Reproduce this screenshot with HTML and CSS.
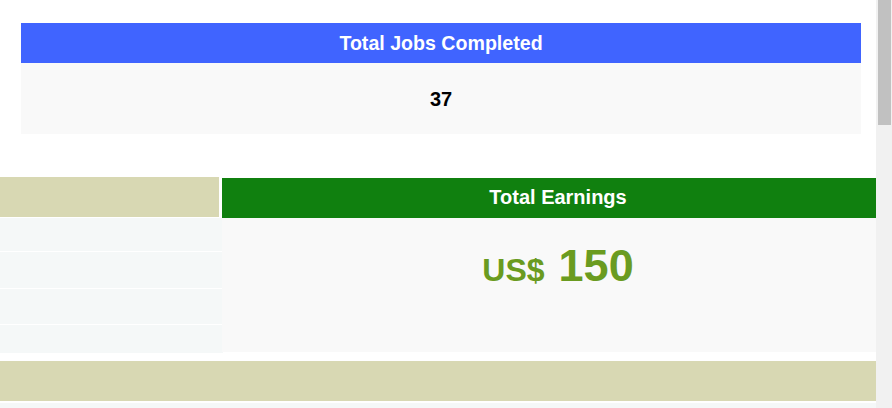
FILE: index.html
```html
<!DOCTYPE html>
<html lang="en">
<head>
<meta charset="utf-8">
<title>Dashboard</title>
<link rel="stylesheet" href="styles.css">
</head>
<body>
<div class="page">
  <section class="jobs">
    <div class="jobs-head">Total Jobs Completed</div>
    <div class="jobs-body">37</div>
  </section>

  <section class="earn">
    <div class="side">
      <div class="side-head"></div>
      <div class="side-row r1"></div>
      <div class="side-row r2"></div>
      <div class="side-row r3"></div>
      <div class="side-row r4"></div>
    </div>
    <div class="earn-card">
      <div class="earn-head">Total Earnings</div>
      <div class="earn-body"><span class="cur">US$</span><span class="amt">150</span></div>
    </div>
  </section>

  <div class="foot-band"></div>
  <div class="foot-row"></div>
</div>
<div class="scrollbar"><div class="thumb"></div></div>
</body>
</html>
```

FILE: styles.css
```css
html, body {
  margin: 0;
  padding: 0;
  background: #ffffff;
  overflow: hidden;
  font-family: "Liberation Sans", Arial, sans-serif;
}

.page {
  width: 894px;
  padding-top: 23px;
}

.jobs {
  margin-left: 21px;
  width: 840px;
}

.jobs-head {
  height: 40px;
  background: #4064ff;
  color: #ffffff;
  font-weight: bold;
  font-size: 19.6px;
  line-height: 40px;
  text-align: center;
}

.jobs-body {
  height: 71px;
  background: #f9f9f9;
  color: #000000;
  font-weight: bold;
  font-size: 20px;
  line-height: 72px;
  text-align: center;
}

.earn {
  margin-top: 43px;
  display: flex;
  gap: 3px;
  align-items: flex-start;
}

.side {
  width: 219px;
  flex: none;
  display: flex;
  flex-direction: column;
  gap: 1px;
}

.side-head {
  height: 40px;
  background: #d8d8b3;
}

.side-row {
  background: #f5f8f8;
  width: 223px;
}
.r1 { height: 33px; }
.r2 { height: 36px; }
.r3 { height: 35px; }
.r4 { height: 28px; }

.earn-card {
  flex: 1;
  margin-top: 1px;
}

.earn-head {
  height: 40px;
  background: #10800f;
  color: #ffffff;
  font-weight: bold;
  font-size: 20px;
  line-height: 38px;
  text-align: center;
}

.earn-body {
  height: 134px;
  background: #f9f9f9;
  color: #6a9b20;
  font-weight: bold;
  text-align: center;
  line-height: 96px;
}

.cur {
  font-size: 32px;
  margin-right: 14px;
}

.amt {
  font-size: 45px;
}

.foot-band {
  margin-top: 8px;
  height: 40px;
  background: #d8d8b3;
}

.foot-row {
  margin-top: 2px;
  height: 20px;
  background: #f5f8f8;
}

.scrollbar {
  position: fixed;
  top: 0;
  right: 0;
  width: 16px;
  height: 100%;
  background: #f1f1f1;
}

.thumb {
  margin: 0 auto;
  width: 13px;
  height: 125px;
  background: #c1c1c1;
}
```
